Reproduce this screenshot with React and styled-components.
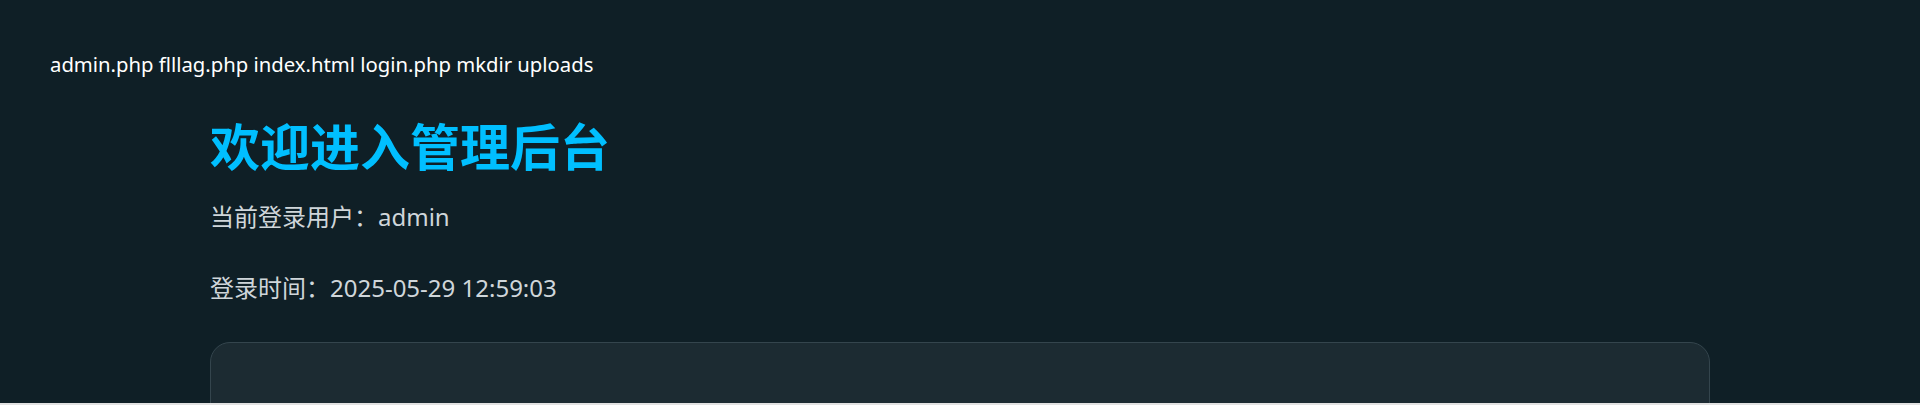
import React from "react";
import styled, { createGlobalStyle } from "styled-components";

const GlobalStyle = createGlobalStyle`
  html {
    background: #e1e1e1;
  }
  body {
    margin: 0;
    font-family: "Noto Sans", "Noto Sans CJK SC", sans-serif;
  }
`;

const Page = styled.div`
  background: #0f1f26;
  height: 403px;
  overflow: hidden;
  padding: 0 50px;
  box-sizing: border-box;
`;

const FileList = styled.div`
  color: #ffffff;
  font-size: 20.3px;
  line-height: 24px;
  padding-top: 52px;
  height: 76px;
  box-sizing: border-box;
`;

const Container = styled.main`
  max-width: 1500px;
  margin: 0 auto;
`;

const Title = styled.h1`
  margin: 36px 0 0;
  color: #00bfff;
  font-family: "Noto Sans CJK SC", sans-serif;
  font-weight: 700;
  font-size: 50px;
  line-height: 64px;
`;

const InfoLine = styled.p`
  margin: ${(p) => p.$gap}px 0 0;
  color: #cfd6da;
  font-size: 24px;
  line-height: 32px;
  font-family: "Noto Sans", "Noto Sans CJK SC", sans-serif;
`;

const Card = styled.section`
  margin-top: 38px;
  height: 120px;
  background: #1c2b32;
  border: 1px solid #34454d;
  border-radius: 20px;
`;

export default function App() {
  return (
    <>
      <GlobalStyle />
      <Page>
        <FileList>admin.php flllag.php index.html login.php mkdir uploads</FileList>
        <Container>
          <Title>欢迎进入管理后台</Title>
          <InfoLine $gap={25}>当前登录用户：admin</InfoLine>
          <InfoLine $gap={39}>登录时间：2025-05-29 12:59:03</InfoLine>
          <Card />
        </Container>
      </Page>
    </>
  );
}
